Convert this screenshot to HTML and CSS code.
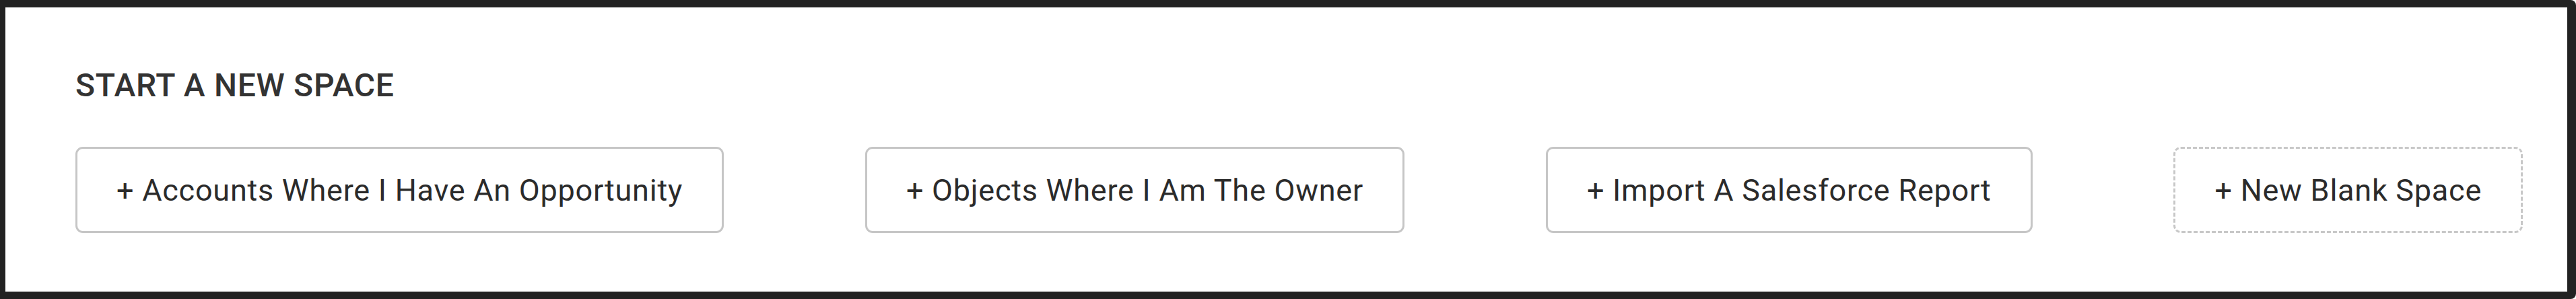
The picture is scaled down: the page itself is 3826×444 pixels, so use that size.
FILE: index.html
```html
<!DOCTYPE html>
<html lang="en">
<head>
<meta charset="utf-8">
<title>Start a new space</title>
<link rel="stylesheet" href="styles.css">
</head>
<body>
  <div class="frame">
    <section class="panel">
      <h2 class="panel-title">START A NEW SPACE</h2>
      <div class="actions">
        <button class="action">+ Accounts Where I Have An Opportunity</button>
        <button class="action">+ Objects Where I Am The Owner</button>
        <button class="action">+ Import A Salesforce Report</button>
        <button class="action action-dashed">+ New Blank Space</button>
      </div>
    </section>
  </div>
</body>
</html>
```
FILE: styles.css
```css
html, body {
  margin: 0;
  padding: 0;
  background: #ffffff;
}

.frame {
  box-sizing: border-box;
  width: 3826px;
  height: 444px;
  border-style: solid;
  border-color: #222222;
  border-width: 11px 13px 11px 8px;
  border-top-right-radius: 8px;
  border-bottom-right-radius: 8px;
  background: #ffffff;
}

.panel {
  box-sizing: border-box;
  height: 100%;
  padding: 92px 66px 0 104px;
  font-family: Roboto, "Liberation Sans", Arial, sans-serif;
  color: #333333;
}

.panel-title {
  margin: 0;
  font-size: 48px;
  line-height: 1;
  font-weight: 500;
  color: #333333;
  letter-spacing: 0.7px;
}

.actions {
  display: flex;
  justify-content: space-between;
  align-items: center;
  margin-top: 67px;
}

.action {
  box-sizing: border-box;
  height: 128px;
  display: flex;
  align-items: center;
  padding: 0 58px;
  background: #ffffff;
  border: 3px solid #c6c6c6;
  border-radius: 11px;
  font-family: Roboto, "Liberation Sans", Arial, sans-serif;
  font-size: 45px;
  line-height: 1;
  font-weight: 400;
  letter-spacing: 0.75px;
  color: #2b2b2b;
  white-space: nowrap;
}

.action-dashed {
  border-style: dashed;
  border-color: #c8c8c8;
}
```
